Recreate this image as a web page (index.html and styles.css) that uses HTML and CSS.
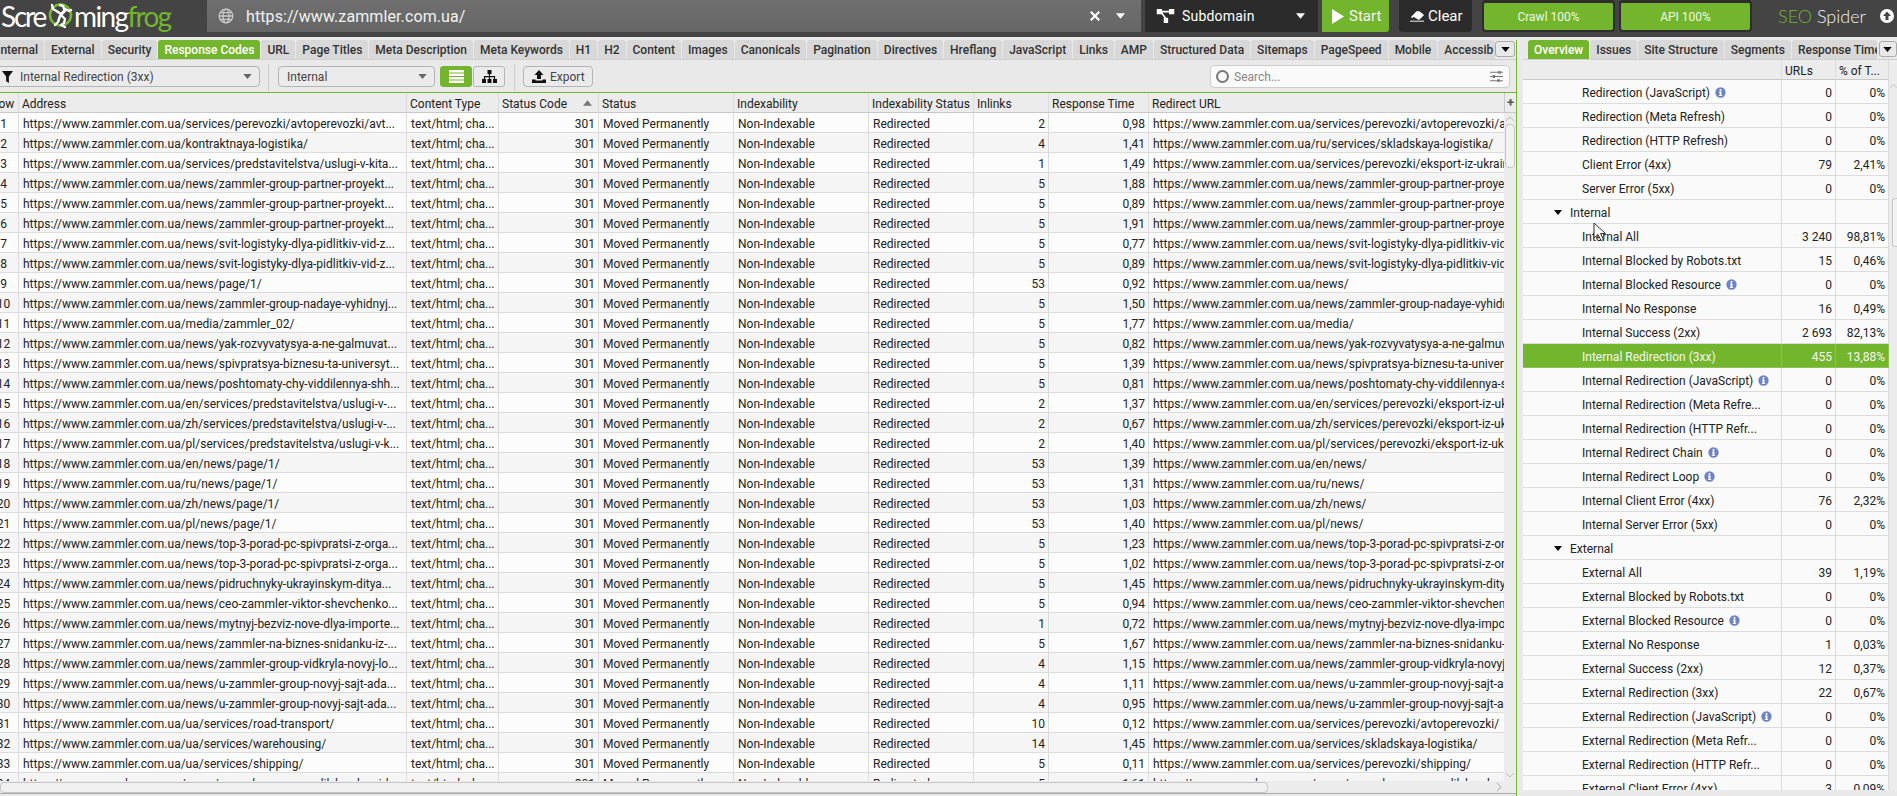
FILE: index.html
```html
<!DOCTYPE html>
<html lang="en">
<head>
    <meta charset="UTF-8">
    <title>Screaming Frog SEO Spider</title>
    <link rel="stylesheet" href="styles.css">
</head>
<body>
<svg class="defs" width="0" height="0">
    <symbol id="info" viewBox="0 0 12 12">
        <circle cx="6" cy="6" r="5.6" fill="#6d82c4"/>
        <rect x="5" y="2.2" width="2" height="1.8" fill="#fff"/>
        <rect x="4.4" y="5" width="2.7" height="1" fill="#fff"/>
        <rect x="5" y="5" width="2" height="4" fill="#fff"/>
        <rect x="4.2" y="8.8" width="3.6" height="1" fill="#fff"/>
    </symbol>
    <symbol id="tri" viewBox="0 0 10 6"><path d="M0 0h10L5 6z"/></symbol>
</svg>
<div class="app">
    <header class="topbar">
        <div class="logo">
            <span class="logo-scre">Scre</span>
            <svg class="logo-frog" viewBox="0 0 26 28">
                <circle cx="13.500" cy="13" r="10.500" fill="none" stroke="#73b62d" stroke-width="2.600"/>
                <g fill="none" stroke="#fff" stroke-width="2.400" stroke-linecap="round" stroke-linejoin="round">
                    <path d="M5 3l1 4 5 3"/>
                    <path d="M13 3l3 1 2 5-5 5-2 6-3 3"/>
                    <path d="M18 7l4 2 2-1"/>
                    <path d="M15 14l3 3-1 4-3 2 4 2"/>
                    <path d="M11 10l3 2 3-3"/>
                </g>
            </svg>
            <span class="logo-ming">ming</span><span class="logo-green logo-tail">frog</span>
        </div>
        <div class="url-box">
            <svg class="globe" viewBox="0 0 16 16" fill="none" stroke="#c9c9c9" stroke-width="1.3">
                <circle cx="8" cy="8" r="6.8"/><ellipse cx="8" cy="8" rx="3" ry="6.8"/><path d="M1.2 8h13.6M2.2 4.6h11.6M2.2 11.4h11.6"/>
            </svg>
            <span class="url-text">https://www.zammler.com.ua/</span>
            <svg class="url-x" viewBox="0 0 10 10"><path d="M1.5 0L5 3.5 8.500 0 10 1.500 6.500 5 10 8.500 8.500 10 5 6.500 1.500 10 0 8.500 3.500 5 0 1.500z" fill="#fff"/></svg>
            <svg class="caret" fill="#fff"><use href="#tri"/></svg>
        </div>
        <div class="mode-box">
            <svg class="mode-icon" viewBox="0 0 20 16" fill="#fff">
                <rect x="0" y="0" width="6" height="6"/><rect x="14" y="0" width="6" height="6"/><rect x="8" y="10" width="5" height="6"/>
                <path d="M6 2h8v2H6zM5 5l1.500-1 5 7-1.500 1z"/>
            </svg>
            <span class="mode-label">Subdomain</span>
            <svg class="caret" fill="#fff"><use href="#tri"/></svg>
        </div>
        <button class="start-btn">
            <svg class="play" viewBox="0 0 12 15"><path d="M0 0l12 7.500L0 15z" fill="#fff"/></svg>Start
        </button>
        <button class="clear-btn">
            <svg class="eraser" viewBox="0 0 16 12"><path d="M1 7l6-6h3l5 4-5 5H4z" fill="#fff"/><path d="M2 8l2-1 5 3-4 1z" fill="#2b2b2b"/><path d="M0 11h15v1H0z" fill="#fff"/></svg>Clear
        </button>
        <div class="progress">Crawl 100%</div>
        <div class="progress">API 100%</div>
        <div class="brand"><span class="logo-green">SEO</span> Spider</div>
        <svg class="up-icon" viewBox="0 0 14 14">
            <circle cx="7" cy="7" r="7" fill="#fff"/>
            <path d="M7 2.500L11 7H8.500v4h-3V7H3z" fill="#444"/>
        </svg>
    </header>

    <div class="main">
        <section class="left">
            <nav class="tabs">
                <div class="tab first-tab">Internal</div>
                <div class="tab">External</div>
                <div class="tab">Security</div>
                <div class="tab active">Response Codes</div>
                <div class="tab">URL</div>
                <div class="tab">Page Titles</div>
                <div class="tab">Meta Description</div>
                <div class="tab">Meta Keywords</div>
                <div class="tab">H1</div>
                <div class="tab">H2</div>
                <div class="tab">Content</div>
                <div class="tab">Images</div>
                <div class="tab">Canonicals</div>
                <div class="tab">Pagination</div>
                <div class="tab">Directives</div>
                <div class="tab">Hreflang</div>
                <div class="tab">JavaScript</div>
                <div class="tab">Links</div>
                <div class="tab">AMP</div>
                <div class="tab">Structured Data</div>
                <div class="tab">Sitemaps</div>
                <div class="tab">PageSpeed</div>
                <div class="tab">Mobile</div>
                <div class="tab clipped">Accessib</div>
                <button class="tab-more"><svg class="tri-sm"><use href="#tri"/></svg></button>
            </nav>
            <div class="toolbar">
                <div class="select select-filter">
                    <svg class="funnel" viewBox="0 0 12 13"><path d="M0 0h12L7.500 6v7l-3-2V6z" fill="#111"/></svg>
                    <span>Internal Redirection (3xx)</span>
                    <svg class="select-caret" fill="#666"><use href="#tri"/></svg>
                </div>
                <div class="sep"></div>
                <div class="select select-type">
                    <span>Internal</span>
                    <svg class="select-caret" fill="#666"><use href="#tri"/></svg>
                </div>
                <button class="view-btn view-on">
                    <svg class="view-icon" viewBox="0 0 15 13" fill="#fff"><path d="M0 0h15v2.500H0zM0 3.500h15V6H0zM0 7h15v2.500H0zM0 10.500h15V13H0z"/></svg>
                </button>
                <button class="view-btn">
                    <svg class="view-icon" viewBox="0 0 15 13" fill="#111"><path d="M5.500 0h4v4h-4zM6.900 4h1.200v2h5v3h-1.200V7.200H8.100V9H6.900V7.200H3.100V9H1.900V6h5zM0 9h4v4H0zM5.500 9h4v4h-4zM11 9h4v4h-4z"/></svg>
                </button>
                <div class="sep sep-b"></div>
                <button class="export-btn">
                    <svg class="export-icon" viewBox="0 0 14 13" fill="#111"><path d="M7 0l4.500 5H9v4H5V5H2.500zM0 9.500h3.500v1h7v-1H14V13H0z"/></svg>Export
                </button>
                <div class="search">
                    <span class="search-ring"></span>
                    <span class="search-text">Search...</span>
                    <svg class="sliders" viewBox="0 0 14 14" fill="#777"><path d="M0 2h14v1H0zM0 6.500h14v1H0zM0 11h14v1H0z"/><path d="M9 1h2.500v3H9zM3 5.500h2.500v3H3zM8 10h2.500v3H8z"/></svg>
                </div>
            </div>
            <div class="grid-box">
                <div class="grid-row-wrap">
                    <div class="grid-view">
                        <table class="grid">
                            <colgroup>
                                <col class="c-row"><col class="c-addr"><col class="c-type"><col class="c-code"><col class="c-status"><col class="c-idx"><col class="c-idxs"><col class="c-in"><col class="c-time"><col class="c-url">
                            </colgroup>
                            <thead>
                                <tr><th class="th-row">Row</th><th>Address</th><th>Content Type</th><th class="th-sort">Status Code<svg class="sort"><use href="#tri"/></svg></th><th>Status</th><th>Indexability</th><th>Indexability Status</th><th>Inlinks</th><th>Response Time</th><th>Redirect URL</th></tr>
                            </thead>
                            <tbody>
                                <tr><td class="ctr">1</td><td>https://www.zammler.com.ua/services/perevozki/avtoperevozki/avt...</td><td>text/html; cha...</td><td class="num">301</td><td>Moved Permanently</td><td>Non-Indexable</td><td>Redirected</td><td class="num">2</td><td class="num">0,98</td><td>https://www.zammler.com.ua/services/perevozki/avtoperevozki/avtoperevozki/</td></tr>
                                <tr><td class="ctr">2</td><td>https://www.zammler.com.ua/kontraktnaya-logistika/</td><td>text/html; cha...</td><td class="num">301</td><td>Moved Permanently</td><td>Non-Indexable</td><td>Redirected</td><td class="num">4</td><td class="num">1,41</td><td>https://www.zammler.com.ua/ru/services/skladskaya-logistika/</td></tr>
                                <tr><td class="ctr">3</td><td>https://www.zammler.com.ua/services/predstavitelstva/uslugi-v-kita...</td><td>text/html; cha...</td><td class="num">301</td><td>Moved Permanently</td><td>Non-Indexable</td><td>Redirected</td><td class="num">1</td><td class="num">1,49</td><td>https://www.zammler.com.ua/services/perevozki/eksport-iz-ukrainy/</td></tr>
                                <tr><td class="ctr">4</td><td>https://www.zammler.com.ua/news/zammler-group-partner-proyekt...</td><td>text/html; cha...</td><td class="num">301</td><td>Moved Permanently</td><td>Non-Indexable</td><td>Redirected</td><td class="num">5</td><td class="num">1,88</td><td>https://www.zammler.com.ua/news/zammler-group-partner-proyektu/</td></tr>
                                <tr><td class="ctr">5</td><td>https://www.zammler.com.ua/news/zammler-group-partner-proyekt...</td><td>text/html; cha...</td><td class="num">301</td><td>Moved Permanently</td><td>Non-Indexable</td><td>Redirected</td><td class="num">5</td><td class="num">0,89</td><td>https://www.zammler.com.ua/news/zammler-group-partner-proyektu/</td></tr>
                                <tr><td class="ctr">6</td><td>https://www.zammler.com.ua/news/zammler-group-partner-proyekt...</td><td>text/html; cha...</td><td class="num">301</td><td>Moved Permanently</td><td>Non-Indexable</td><td>Redirected</td><td class="num">5</td><td class="num">1,91</td><td>https://www.zammler.com.ua/news/zammler-group-partner-proyektu/</td></tr>
                                <tr><td class="ctr">7</td><td>https://www.zammler.com.ua/news/svit-logistyky-dlya-pidlitkiv-vid-z...</td><td>text/html; cha...</td><td class="num">301</td><td>Moved Permanently</td><td>Non-Indexable</td><td>Redirected</td><td class="num">5</td><td class="num">0,77</td><td>https://www.zammler.com.ua/news/svit-logistyky-dlya-pidlitkiv-vid-zammler/</td></tr>
                                <tr><td class="ctr">8</td><td>https://www.zammler.com.ua/news/svit-logistyky-dlya-pidlitkiv-vid-z...</td><td>text/html; cha...</td><td class="num">301</td><td>Moved Permanently</td><td>Non-Indexable</td><td>Redirected</td><td class="num">5</td><td class="num">0,89</td><td>https://www.zammler.com.ua/news/svit-logistyky-dlya-pidlitkiv-vid-zammler/</td></tr>
                                <tr><td class="ctr">9</td><td>https://www.zammler.com.ua/news/page/1/</td><td>text/html; cha...</td><td class="num">301</td><td>Moved Permanently</td><td>Non-Indexable</td><td>Redirected</td><td class="num">53</td><td class="num">0,92</td><td>https://www.zammler.com.ua/news/</td></tr>
                                <tr><td class="ctr">10</td><td>https://www.zammler.com.ua/news/zammler-group-nadaye-vyhidnyj...</td><td>text/html; cha...</td><td class="num">301</td><td>Moved Permanently</td><td>Non-Indexable</td><td>Redirected</td><td class="num">5</td><td class="num">1,50</td><td>https://www.zammler.com.ua/news/zammler-group-nadaye-vyhidnyj-den/</td></tr>
                                <tr><td class="ctr">11</td><td>https://www.zammler.com.ua/media/zammler_02/</td><td>text/html; cha...</td><td class="num">301</td><td>Moved Permanently</td><td>Non-Indexable</td><td>Redirected</td><td class="num">5</td><td class="num">1,77</td><td>https://www.zammler.com.ua/media/</td></tr>
                                <tr><td class="ctr">12</td><td>https://www.zammler.com.ua/news/yak-rozvyvatysya-a-ne-galmuvat...</td><td>text/html; cha...</td><td class="num">301</td><td>Moved Permanently</td><td>Non-Indexable</td><td>Redirected</td><td class="num">5</td><td class="num">0,82</td><td>https://www.zammler.com.ua/news/yak-rozvyvatysya-a-ne-galmuvaty/</td></tr>
                                <tr><td class="ctr">13</td><td>https://www.zammler.com.ua/news/spivpratsya-biznesu-ta-universyt...</td><td>text/html; cha...</td><td class="num">301</td><td>Moved Permanently</td><td>Non-Indexable</td><td>Redirected</td><td class="num">5</td><td class="num">1,39</td><td>https://www.zammler.com.ua/news/spivpratsya-biznesu-ta-universytetiv/</td></tr>
                                <tr><td class="ctr">14</td><td>https://www.zammler.com.ua/news/poshtomaty-chy-viddilennya-shh...</td><td>text/html; cha...</td><td class="num">301</td><td>Moved Permanently</td><td>Non-Indexable</td><td>Redirected</td><td class="num">5</td><td class="num">0,81</td><td>https://www.zammler.com.ua/news/poshtomaty-chy-viddilennya-shho/</td></tr>
                                <tr><td class="ctr">15</td><td>https://www.zammler.com.ua/en/services/predstavitelstva/uslugi-v-...</td><td>text/html; cha...</td><td class="num">301</td><td>Moved Permanently</td><td>Non-Indexable</td><td>Redirected</td><td class="num">2</td><td class="num">1,37</td><td>https://www.zammler.com.ua/en/services/perevozki/eksport-iz-ukrainy/</td></tr>
                                <tr><td class="ctr">16</td><td>https://www.zammler.com.ua/zh/services/predstavitelstva/uslugi-v-...</td><td>text/html; cha...</td><td class="num">301</td><td>Moved Permanently</td><td>Non-Indexable</td><td>Redirected</td><td class="num">2</td><td class="num">0,67</td><td>https://www.zammler.com.ua/zh/services/perevozki/eksport-iz-ukrainy/</td></tr>
                                <tr><td class="ctr">17</td><td>https://www.zammler.com.ua/pl/services/predstavitelstva/uslugi-v-k...</td><td>text/html; cha...</td><td class="num">301</td><td>Moved Permanently</td><td>Non-Indexable</td><td>Redirected</td><td class="num">2</td><td class="num">1,40</td><td>https://www.zammler.com.ua/pl/services/perevozki/eksport-iz-ukrainy/</td></tr>
                                <tr><td class="ctr">18</td><td>https://www.zammler.com.ua/en/news/page/1/</td><td>text/html; cha...</td><td class="num">301</td><td>Moved Permanently</td><td>Non-Indexable</td><td>Redirected</td><td class="num">53</td><td class="num">1,39</td><td>https://www.zammler.com.ua/en/news/</td></tr>
                                <tr><td class="ctr">19</td><td>https://www.zammler.com.ua/ru/news/page/1/</td><td>text/html; cha...</td><td class="num">301</td><td>Moved Permanently</td><td>Non-Indexable</td><td>Redirected</td><td class="num">53</td><td class="num">1,31</td><td>https://www.zammler.com.ua/ru/news/</td></tr>
                                <tr><td class="ctr">20</td><td>https://www.zammler.com.ua/zh/news/page/1/</td><td>text/html; cha...</td><td class="num">301</td><td>Moved Permanently</td><td>Non-Indexable</td><td>Redirected</td><td class="num">53</td><td class="num">1,03</td><td>https://www.zammler.com.ua/zh/news/</td></tr>
                                <tr><td class="ctr">21</td><td>https://www.zammler.com.ua/pl/news/page/1/</td><td>text/html; cha...</td><td class="num">301</td><td>Moved Permanently</td><td>Non-Indexable</td><td>Redirected</td><td class="num">53</td><td class="num">1,40</td><td>https://www.zammler.com.ua/pl/news/</td></tr>
                                <tr><td class="ctr">22</td><td>https://www.zammler.com.ua/news/top-3-porad-pc-spivpratsi-z-orga...</td><td>text/html; cha...</td><td class="num">301</td><td>Moved Permanently</td><td>Non-Indexable</td><td>Redirected</td><td class="num">5</td><td class="num">1,23</td><td>https://www.zammler.com.ua/news/top-3-porad-pc-spivpratsi-z-organizacziyamy/</td></tr>
                                <tr><td class="ctr">23</td><td>https://www.zammler.com.ua/news/top-3-porad-pc-spivpratsi-z-orga...</td><td>text/html; cha...</td><td class="num">301</td><td>Moved Permanently</td><td>Non-Indexable</td><td>Redirected</td><td class="num">5</td><td class="num">1,02</td><td>https://www.zammler.com.ua/news/top-3-porad-pc-spivpratsi-z-organizacziyamy/</td></tr>
                                <tr><td class="ctr">24</td><td>https://www.zammler.com.ua/news/pidruchnyky-ukrayinskym-ditya...</td><td>text/html; cha...</td><td class="num">301</td><td>Moved Permanently</td><td>Non-Indexable</td><td>Redirected</td><td class="num">5</td><td class="num">1,45</td><td>https://www.zammler.com.ua/news/pidruchnyky-ukrayinskym-dityam/</td></tr>
                                <tr><td class="ctr">25</td><td>https://www.zammler.com.ua/news/ceo-zammler-viktor-shevchenko...</td><td>text/html; cha...</td><td class="num">301</td><td>Moved Permanently</td><td>Non-Indexable</td><td>Redirected</td><td class="num">5</td><td class="num">0,94</td><td>https://www.zammler.com.ua/news/ceo-zammler-viktor-shevchenko/</td></tr>
                                <tr><td class="ctr">26</td><td>https://www.zammler.com.ua/news/mytnyj-bezviz-nove-dlya-importe...</td><td>text/html; cha...</td><td class="num">301</td><td>Moved Permanently</td><td>Non-Indexable</td><td>Redirected</td><td class="num">1</td><td class="num">0,72</td><td>https://www.zammler.com.ua/news/mytnyj-bezviz-nove-dlya-importeriv/</td></tr>
                                <tr><td class="ctr">27</td><td>https://www.zammler.com.ua/news/zammler-na-biznes-snidanku-iz-...</td><td>text/html; cha...</td><td class="num">301</td><td>Moved Permanently</td><td>Non-Indexable</td><td>Redirected</td><td class="num">5</td><td class="num">1,67</td><td>https://www.zammler.com.ua/news/zammler-na-biznes-snidanku-iz-ministrom/</td></tr>
                                <tr><td class="ctr">28</td><td>https://www.zammler.com.ua/news/zammler-group-vidkryla-novyj-lo...</td><td>text/html; cha...</td><td class="num">301</td><td>Moved Permanently</td><td>Non-Indexable</td><td>Redirected</td><td class="num">4</td><td class="num">1,15</td><td>https://www.zammler.com.ua/news/zammler-group-vidkryla-novyj-logistychnyj/</td></tr>
                                <tr><td class="ctr">29</td><td>https://www.zammler.com.ua/news/u-zammler-group-novyj-sajt-ada...</td><td>text/html; cha...</td><td class="num">301</td><td>Moved Permanently</td><td>Non-Indexable</td><td>Redirected</td><td class="num">4</td><td class="num">1,11</td><td>https://www.zammler.com.ua/news/u-zammler-group-novyj-sajt-adaptovanyj/</td></tr>
                                <tr><td class="ctr">30</td><td>https://www.zammler.com.ua/news/u-zammler-group-novyj-sajt-ada...</td><td>text/html; cha...</td><td class="num">301</td><td>Moved Permanently</td><td>Non-Indexable</td><td>Redirected</td><td class="num">4</td><td class="num">0,95</td><td>https://www.zammler.com.ua/news/u-zammler-group-novyj-sajt-adaptovanyj/</td></tr>
                                <tr><td class="ctr">31</td><td>https://www.zammler.com.ua/ua/services/road-transport/</td><td>text/html; cha...</td><td class="num">301</td><td>Moved Permanently</td><td>Non-Indexable</td><td>Redirected</td><td class="num">10</td><td class="num">0,12</td><td>https://www.zammler.com.ua/services/perevozki/avtoperevozki/</td></tr>
                                <tr><td class="ctr">32</td><td>https://www.zammler.com.ua/ua/services/warehousing/</td><td>text/html; cha...</td><td class="num">301</td><td>Moved Permanently</td><td>Non-Indexable</td><td>Redirected</td><td class="num">14</td><td class="num">1,45</td><td>https://www.zammler.com.ua/services/skladskaya-logistika/</td></tr>
                                <tr><td class="ctr">33</td><td>https://www.zammler.com.ua/ua/services/shipping/</td><td>text/html; cha...</td><td class="num">301</td><td>Moved Permanently</td><td>Non-Indexable</td><td>Redirected</td><td class="num">5</td><td class="num">0,11</td><td>https://www.zammler.com.ua/services/perevozki/shipping/</td></tr>
                                <tr><td class="ctr">34</td><td>https://www.zammler.com.ua/news/zammler-group-podilylys-dosvid...</td><td>text/html; cha...</td><td class="num">301</td><td>Moved Permanently</td><td>Non-Indexable</td><td>Redirected</td><td class="num">5</td><td class="num">1,61</td><td>https://www.zammler.com.ua/news/zammler-group-podilylys-dosvidom/</td></tr>
                            </tbody>
                        </table>
                    </div>
                    <div class="vbar">
                        <div class="vbar-plus">+</div>
                        <svg class="chev" viewBox="0 0 8 5"><path d="M0 5l4-4 4 4" fill="none" stroke="#bbb"/></svg>
                        <div class="vthumb"></div>
                        <svg class="chev chev-end" viewBox="0 0 8 5"><path d="M0 0l4 4 4-4" fill="none" stroke="#bbb"/></svg>
                    </div>
                </div>
                <div class="hbar">
                    <div class="hthumb"></div>
                    <svg class="chev-r" viewBox="0 0 5 8"><path d="M0 0l4 4-4 4" fill="none" stroke="#aaa"/></svg>
                </div>
            </div>
        </section>

        <section class="right">
            <nav class="tabs tabs-right">
                <div class="tab active">Overview</div>
                <div class="tab">Issues</div>
                <div class="tab">Site Structure</div>
                <div class="tab">Segments</div>
                <div class="tab clipped-r">Response Time</div>
                <button class="tab-more"><svg class="tri-sm"><use href="#tri"/></svg></button>
            </nav>
            <div class="tree-box">
                <div class="tree-view">
                    <table class="tree">
                        <colgroup><col class="t-name"><col class="t-urls"><col class="t-pct"></colgroup>
                        <thead><tr><th></th><th>URLs</th><th>% of T...</th></tr></thead>
                        <tbody>
                            <tr><td class="leaf">Redirection (JavaScript)<svg class="info"><use href="#info"/></svg></td><td class="num">0</td><td class="num">0%</td></tr>
                            <tr><td class="leaf">Redirection (Meta Refresh)</td><td class="num">0</td><td class="num">0%</td></tr>
                            <tr><td class="leaf">Redirection (HTTP Refresh)</td><td class="num">0</td><td class="num">0%</td></tr>
                            <tr><td class="leaf">Client Error (4xx)</td><td class="num">79</td><td class="num">2,41%</td></tr>
                            <tr><td class="leaf">Server Error (5xx)</td><td class="num">0</td><td class="num">0%</td></tr>
                            <tr><td class="group"><svg class="tri-open"><use href="#tri"/></svg>Internal</td><td></td><td></td></tr>
                            <tr><td class="leaf">Internal All</td><td class="num">3 240</td><td class="num">98,81%</td></tr>
                            <tr><td class="leaf">Internal Blocked by Robots.txt</td><td class="num">15</td><td class="num">0,46%</td></tr>
                            <tr><td class="leaf">Internal Blocked Resource<svg class="info"><use href="#info"/></svg></td><td class="num">0</td><td class="num">0%</td></tr>
                            <tr><td class="leaf">Internal No Response</td><td class="num">16</td><td class="num">0,49%</td></tr>
                            <tr><td class="leaf">Internal Success (2xx)</td><td class="num">2 693</td><td class="num">82,13%</td></tr>
                            <tr class="selected"><td class="leaf">Internal Redirection (3xx)</td><td class="num">455</td><td class="num">13,88%</td></tr>
                            <tr><td class="leaf">Internal Redirection (JavaScript)<svg class="info"><use href="#info"/></svg></td><td class="num">0</td><td class="num">0%</td></tr>
                            <tr><td class="leaf">Internal Redirection (Meta Refre...</td><td class="num">0</td><td class="num">0%</td></tr>
                            <tr><td class="leaf">Internal Redirection (HTTP Refr...</td><td class="num">0</td><td class="num">0%</td></tr>
                            <tr><td class="leaf">Internal Redirect Chain<svg class="info"><use href="#info"/></svg></td><td class="num">0</td><td class="num">0%</td></tr>
                            <tr><td class="leaf">Internal Redirect Loop<svg class="info"><use href="#info"/></svg></td><td class="num">0</td><td class="num">0%</td></tr>
                            <tr><td class="leaf">Internal Client Error (4xx)</td><td class="num">76</td><td class="num">2,32%</td></tr>
                            <tr><td class="leaf">Internal Server Error (5xx)</td><td class="num">0</td><td class="num">0%</td></tr>
                            <tr><td class="group"><svg class="tri-open"><use href="#tri"/></svg>External</td><td></td><td></td></tr>
                            <tr><td class="leaf">External All</td><td class="num">39</td><td class="num">1,19%</td></tr>
                            <tr><td class="leaf">External Blocked by Robots.txt</td><td class="num">0</td><td class="num">0%</td></tr>
                            <tr><td class="leaf">External Blocked Resource<svg class="info"><use href="#info"/></svg></td><td class="num">0</td><td class="num">0%</td></tr>
                            <tr><td class="leaf">External No Response</td><td class="num">1</td><td class="num">0,03%</td></tr>
                            <tr><td class="leaf">External Success (2xx)</td><td class="num">12</td><td class="num">0,37%</td></tr>
                            <tr><td class="leaf">External Redirection (3xx)</td><td class="num">22</td><td class="num">0,67%</td></tr>
                            <tr><td class="leaf">External Redirection (JavaScript)<svg class="info"><use href="#info"/></svg></td><td class="num">0</td><td class="num">0%</td></tr>
                            <tr><td class="leaf">External Redirection (Meta Refr...</td><td class="num">0</td><td class="num">0%</td></tr>
                            <tr><td class="leaf">External Redirection (HTTP Refr...</td><td class="num">0</td><td class="num">0%</td></tr>
                            <tr><td class="leaf">External Client Error (4xx)</td><td class="num">3</td><td class="num">0,09%</td></tr>
                        </tbody>
                    </table>
                </div>
                <div class="tree-bar">
                    <svg class="chev" viewBox="0 0 8 5"><path d="M0 5l4-4 4 4" fill="none" stroke="#bbb"/></svg>
                    <div class="tree-thumb"></div>
                </div>
            </div>
        </section>
    </div>

    <svg class="cursor" viewBox="0 0 13 20"><path d="M1 1v15l4-3.500 3 6 2.500-1-3-6h5z" fill="#fff" stroke="#333" stroke-width="1"/></svg>
</div>
</body>
</html>
```

FILE: styles.css
```css
* {
    box-sizing: border-box;
}
body {
    margin: 0;
    font-family: Roboto, "Liberation Sans", sans-serif;
    font-size: 12px;
    color: #222;
    background: #e9e9e9;
    overflow: hidden;
}
button {
    font-family: inherit;
}
.defs {
    position: absolute;
}
.app {
    position: relative;
    width: 1897px;
    height: 796px;
    overflow: hidden;
    display: flex;
    flex-direction: column;
}

/* top bar */
.topbar {
    height: 37px;
    flex: none;
    display: flex;
    background: #444;
    color: #fff;
}
.topbar > * {
    flex: none;
}
.logo {
    width: 207px;
    height: 32px;
    padding-left: 1px;
    display: flex;
    align-items: center;
    font-family: Lato, sans-serif;
    font-size: 28px;
    color: #fff;
}
.logo-scre {
    width: 45px;
    letter-spacing: -2.200px;
}
.logo-ming {
    letter-spacing: -1.600px;
}
.logo-tail {
    letter-spacing: -1.800px;
}
.logo-frog {
    width: 26px;
    height: 28px;
    flex: none;
    margin: 0 1px 0 1px;
}
.logo-green {
    color: #73b62d;
}
.url-box {
    width: 934px;
    height: 32px;
    display: flex;
    align-items: center;
    padding: 0 16px 0 11px;
    background: linear-gradient(to bottom, #6f6f6f, #666);
}
.globe {
    width: 16px;
    height: 16px;
    margin-right: 12px;
}
.url-text {
    flex: 1;
    font-size: 16px;
    letter-spacing: 0.1px;
    color: #f2f2f2;
}
.url-x {
    width: 10px;
    height: 10px;
    margin-right: 16px;
}
.caret {
    width: 9px;
    height: 6px;
}
.mode-box {
    width: 173px;
    height: 32px;
    margin-left: 4px;
    display: flex;
    align-items: center;
    padding: 0 13px 0 11px;
    background: #2b2b2b;
}
.mode-icon {
    width: 19px;
    height: 14px;
    margin-right: 7px;
}
.mode-label {
    flex: 1;
    font-size: 14px;
    letter-spacing: 0.2px;
}
.start-btn {
    width: 67px;
    height: 32px;
    margin-left: 4px;
    border: none;
    border-radius: 0 0 3px 0;
    padding: 0 0 0 10px;
    display: flex;
    align-items: center;
    background: #73b62d;
    color: #f2f2f2;
    font-size: 15px;
}
.play {
    width: 12px;
    height: 15px;
    margin-right: 5px;
}
.clear-btn {
    width: 73px;
    height: 32px;
    margin-left: 10px;
    border: none;
    border-radius: 0 0 4px 4px;
    padding: 0 0 0 11px;
    display: flex;
    align-items: center;
    background: #2b2b2b;
    color: #fff;
    font-size: 15px;
}
.eraser {
    width: 15px;
    height: 12px;
    margin-right: 3px;
}
.progress {
    height: 32px;
    width: 133px;
    margin-left: 10px;
    border: 2px solid #2e2e2e;
    border-top-width: 3px;
    border-radius: 4px;
    background: #73b62d;
    color: #eef6e4;
    text-align: center;
    line-height: 28px;
    font-size: 12px;
}
.progress + .progress {
    margin-left: 4px;
}
.brand {
    width: 86px;
    margin-left: 26px;
    height: 32px;
    line-height: 33px;
    white-space: nowrap;
    font-family: Lato, sans-serif;
    font-weight: 300;
    font-size: 18px;
    color: #f2f2f2;
}
.up-icon {
    width: 14px;
    height: 14px;
    margin: 9px 0 0 16px;
}

/* layout */
.main {
    flex: 1;
    min-height: 0;
    display: flex;
    padding-top: 3px;
}
.left {
    width: 1517px;
    flex: none;
    display: flex;
    flex-direction: column;
    border-right: 1px solid #73b62d;
}
.right {
    flex: 1;
    min-width: 0;
    margin-left: 6px;
    display: flex;
    flex-direction: column;
}

/* tabs */
.tabs {
    height: 20px;
    flex: none;
    display: flex;
    gap: 1px;
    overflow: hidden;
    border-bottom: 1px solid #cfcfcf;
}
.tab {
    height: 19px;
    flex: none;
    padding: 0 6px;
    line-height: 21px;
    font-weight: 500;
    color: #333;
    background: #d8d8d8;
    border-radius: 3px 3px 0 0;
    white-space: nowrap;
}
.tab.active {
    background: #73b62d;
    color: #fff;
}
.first-tab {
    margin-left: -9px;
}
.clipped {
    width: 57px;
    overflow: hidden;
    padding-right: 0;
    flex: none;
}
.tab-more {
    width: 20px;
    height: 16px;
    flex: none;
    margin: 1px 0 0 -1px;
    padding: 0;
    border: 1px solid #aaa;
    border-radius: 3px;
    background: #e9e9e9;
    display: flex;
    align-items: center;
    justify-content: center;
}
.tri-sm {
    width: 9px;
    height: 5px;
}
.tabs-right {
    padding-left: 5px;
}
.clipped-r {
    width: 85px;
    overflow: hidden;
    padding-right: 0;
}
.tabs-right .tab-more {
    width: 18px;
    margin-left: 1px;
}

/* toolbar */
.toolbar {
    height: 33px;
    flex: none;
    display: flex;
    align-items: flex-start;
    padding-top: 6px;
    border-bottom: 1px solid #73b62d;
}
.select {
    height: 21px;
    display: flex;
    align-items: center;
    background: #ebebeb;
    border: 1px solid #b5b5b5;
    border-radius: 4px;
    color: #444;
    font-size: 12px;
}
.select span {
    flex: 1;
}
.select-filter {
    width: 264px;
    margin-left: -4px;
    padding: 0 7px 0 5px;
}
.funnel {
    width: 11px;
    height: 12px;
    margin-right: 7px;
}
.select-caret {
    width: 9px;
    height: 5px;
}
.select-type {
    width: 157px;
    padding: 0 7px 0 8px;
}
.sep {
    width: 1px;
    height: 27px;
    margin: -2px 9px 0 8px;
    background: #ccc;
}
.sep-b {
    margin: -2px 8px 0 9px;
}
.view-btn {
    width: 32px;
    height: 21px;
    padding: 0;
    margin-left: 5px;
    border: 1px solid #b5b5b5;
    border-radius: 3px;
    background: #ebebeb;
    display: flex;
    align-items: center;
    justify-content: center;
}
.view-btn + .view-btn {
    margin-left: 1px;
}
.view-on {
    background: #73b62d;
    border-color: #73b62d;
}
.view-icon {
    width: 15px;
    height: 13px;
}
.export-btn {
    width: 70px;
    height: 21px;
    padding: 0 0 0 8px;
    border: 1px solid #b5b5b5;
    border-radius: 4px;
    background: #ebebeb;
    color: #444;
    font-size: 12px;
    display: flex;
    align-items: center;
}
.export-icon {
    width: 14px;
    height: 13px;
    margin-right: 4px;
}
.search {
    width: 300px;
    height: 23px;
    margin: -1px 6px 0 auto;
    padding: 0 6px 0 5px;
    display: flex;
    align-items: center;
    background: #fafafa;
    border: 1px solid #ccc;
    border-radius: 4px;
}
.search-ring {
    width: 13px;
    height: 13px;
    border: 2px solid #777;
    border-radius: 50%;
    margin-right: 5px;
}
.search-text {
    flex: 1;
    color: #888;
}
.sliders {
    width: 13px;
    height: 13px;
}

/* main grid */
.grid-box {
    flex: 1;
    min-height: 0;
    display: flex;
    flex-direction: column;
}
.grid-row-wrap {
    flex: 1;
    min-height: 0;
    display: flex;
}
.grid-view {
    flex: 1;
    min-width: 0;
    overflow: hidden;
    background: #fff;
}
.grid {
    width: 1518px;
    margin-left: -14px;
    table-layout: fixed;
    border-collapse: separate;
    border-spacing: 0;
}
.c-row { width: 33px; }
.c-addr { width: 388px; }
.c-type { width: 92px; }
.c-code { width: 100px; }
.c-status { width: 135px; }
.c-idx { width: 135px; }
.c-idxs { width: 105px; }
.c-in { width: 75px; }
.c-time { width: 100px; }
.c-url { width: 355px; }
.grid th,
.grid td,
.tree th,
.tree td {
    height: 20px;
    padding: 2px 3px 0;
    font-weight: 400;
    text-align: left;
    white-space: nowrap;
    overflow: hidden;
    border-right: 1px solid #dcdcdc;
    border-bottom: 1px solid #dcdcdc;
}
.grid th,
.tree th {
    background: #ececec;
    border-bottom-color: #c8c8c8;
    color: #222;
}
.grid th.th-row {
    padding: 2px 0 0 5px;
}
.th-sort {
    position: relative;
}
.sort {
    position: absolute;
    right: 6px;
    top: 7px;
    width: 9px;
    height: 6px;
    fill: #777;
    transform: rotate(180deg);
}
.grid td {
    padding: 2px 4px 0;
}
.grid tbody tr:nth-child(odd) td {
    background: #fcfcfc;
}
.grid tbody tr:nth-child(even) td {
    background: #f5f5f5;
}
.grid td:last-child,
.grid th:last-child {
    border-right: none;
}
.grid td.ctr {
    text-align: center;
    padding: 2px 0 0 3px;
}
.grid td.num,
.tree td.num {
    text-align: right;
    padding-right: 3px;
}

/* scrollbars */
.vbar {
    width: 12px;
    flex: none;
    display: flex;
    flex-direction: column;
    align-items: center;
    background: #ececec;
}
.vbar-plus {
    width: 100%;
    height: 20px;
    line-height: 19px;
    text-align: center;
    font-weight: 700;
    font-size: 13px;
    color: #555;
    border-bottom: 1px solid #c8c8c8;
    border-left: 1px solid #c8c8c8;
}
.chev {
    width: 8px;
    height: 5px;
    margin-top: 3px;
    flex: none;
}
.chev-end {
    margin-top: auto;
    margin-bottom: 3px;
}
.vthumb {
    width: 10px;
    height: 44px;
    margin-top: 3px;
    background: #f2f2f2;
    border: 1px solid #c6c6c6;
    border-radius: 4px;
}
.hbar {
    height: 13px;
    flex: none;
    display: flex;
    align-items: center;
    background: #ececec;
    border-bottom: 1px solid #aaa;
    margin-bottom: 2px;
}
.hthumb {
    width: 1268px;
    height: 11px;
    flex: none;
    background: #f0f0f0;
    border: 1px solid #c6c6c6;
    border-radius: 4px;
}
.chev-r {
    width: 5px;
    height: 8px;
    margin-left: 229px;
}

/* overview tree */
.tree-box {
    height: 730px;
    flex: none;
    display: flex;
}
.tree-view {
    width: 366px;
    flex: none;
    overflow: hidden;
    background: #fafafa;
}
.tree {
    width: 366px;
    table-layout: fixed;
    border-collapse: separate;
    border-spacing: 0;
}
.t-name { width: 259px; }
.t-urls { width: 54px; }
.t-pct { width: 53px; }
.tree tbody td {
    height: 24px;
    background: #fafafa;
}
.tree td.leaf {
    padding-left: 59px;
}
.tree td.group {
    padding-left: 31px;
}
.tri-open {
    width: 8px;
    height: 5px;
    margin-right: 8px;
    vertical-align: 2px;
}
.info {
    width: 11px;
    height: 11px;
    margin-left: 5px;
    vertical-align: -1.500px;
}
.tree tr.selected td {
    background: #73b62d;
    color: #f5f5f5;
    border-right-color: #8cc44f;
    border-bottom-color: #8cc44f;
}
.tree-bar {
    flex: 1;
    display: flex;
    flex-direction: column;
    align-items: flex-end;
    background: #ececec;
}
.tree-bar .chev {
    margin: 23px 0 0;
    width: 7px;
}
.tree-thumb {
    width: 5px;
    height: 49px;
    margin-top: 110px;
    background: #f2f2f2;
    border: 1px solid #c6c6c6;
    border-right: none;
    border-radius: 3px 0 0 3px;
}

.cursor {
    position: absolute;
    left: 1593px;
    top: 222px;
    width: 13px;
    height: 20px;
}
```
